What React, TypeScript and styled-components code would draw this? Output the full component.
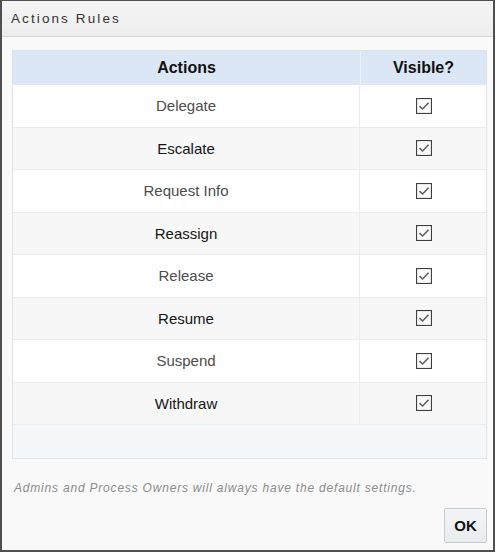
import React from 'react';
import styled, { createGlobalStyle } from 'styled-components';

const actions = [
  'Delegate',
  'Escalate',
  'Request Info',
  'Reassign',
  'Release',
  'Resume',
  'Suspend',
  'Withdraw',
];

const GlobalStyle = createGlobalStyle`
  html, body {
    margin: 0;
    padding: 0;
    background: #ffffff;
  }
  body {
    font-family: "Liberation Sans", Arial, sans-serif;
  }
`;

const CheckIcon = () => (
  <svg width='16' height='16' viewBox='0 0 16 16'>
    <rect x='0.5' y='0.5' width='15' height='15' fill='#fbfbfb' stroke='#404040' strokeWidth='1.2' />
    <path d='M3.5 8.2 L6.6 11 L12.6 4.8' fill='none' stroke='#5f5f5f' strokeWidth='1.6' />
  </svg>
);

const App = () => {
  return (
    <>
      <GlobalStyle />
      <Dialog>
        <TitleBar>Actions Rules</TitleBar>
        <Body>
          <Table>
            <HeaderRow>
              <HeaderCell>Actions</HeaderCell>
              <HeaderCell>Visible?</HeaderCell>
            </HeaderRow>
            {actions.map((name, i) => (
              <Row key={name} $striped={i % 2 === 1}>
                <NameCell $striped={i % 2 === 1}>{name}</NameCell>
                <CheckCell>
                  <CheckIcon />
                </CheckCell>
              </Row>
            ))}
            <Filler />
          </Table>
          <Note>Admins and Process Owners will always have the default settings.</Note>
          <Buttons>
            <OkButton>OK</OkButton>
          </Buttons>
        </Body>
      </Dialog>
    </>
  );
};

const Dialog = styled.div`
  box-sizing: border-box;
  width: 495px;
  height: 552px;
  border: 2px solid #4f4f4f;
  border-top-width: 1px;
  background: #f9f9f9;
  display: flex;
  flex-direction: column;
`;

const TitleBar = styled.div`
  height: 35px;
  border-bottom: 1px solid #cdd6df;
  background: linear-gradient(#f5f5f5, #ededed);
  padding-left: 9px;
  display: flex;
  align-items: center;
  font-size: 13.5px;
  letter-spacing: 2.1px;
  color: #333333;
`;

const Body = styled.div`
  flex: 1;
  padding: 13px 6px 0 10px;
  display: flex;
  flex-direction: column;
`;

const Table = styled.div`
  border: 1px solid #dde3ea;
  background: #f5f8fb;
  display: flex;
  flex-direction: column;
`;

const HeaderRow = styled.div`
  display: grid;
  grid-template-columns: 1fr 126px;
  height: 33px;
  background: #dbe7f4;
  border-bottom: 1px solid #e3e8ee;
`;

const HeaderCell = styled.div`
  display: flex;
  align-items: center;
  justify-content: center;
  font-weight: bold;
  font-size: 16px;
  color: #111111;
  & + & {
    border-left: 1px solid #eef2f6;
  }
`;

const Row = styled.div<{ $striped: boolean }>`
  display: grid;
  grid-template-columns: 1fr 126px;
  height: 41.5px;
  border-bottom: 1px solid #ebebeb;
  background: ${(p) => (p.$striped ? '#f7f7f7' : '#ffffff')};
`;

const NameCell = styled.div<{ $striped: boolean }>`
  display: flex;
  align-items: center;
  justify-content: center;
  font-size: 15px;
  color: ${(p) => (p.$striped ? '#151515' : '#4c4c4c')};
  border-right: 1px solid #ececec;
`;

const CheckCell = styled.div`
  display: flex;
  align-items: center;
  justify-content: center;
  svg {
    margin-left: 2px;
  }
`;

const Filler = styled.div`
  height: 33px;
`;

const Note = styled.div`
  margin-top: 21px;
  line-height: 16px;
  font-size: 12px;
  letter-spacing: 0.8px;
  font-style: italic;
  color: #8c8c8c;
  padding-left: 2px;
`;

const Buttons = styled.div`
  display: flex;
  justify-content: flex-end;
  margin-top: 12px;
`;

const OkButton = styled.button`
  box-sizing: border-box;
  width: 43px;
  height: 35px;
  border: 1px solid #c6ccd2;
  border-radius: 2px;
  background: linear-gradient(#f3f5f7, #e9ecef);
  font-family: "Liberation Sans", Arial, sans-serif;
  font-weight: bold;
  font-size: 15px;
  color: #111111;
  padding: 0;
`;

export default App;
